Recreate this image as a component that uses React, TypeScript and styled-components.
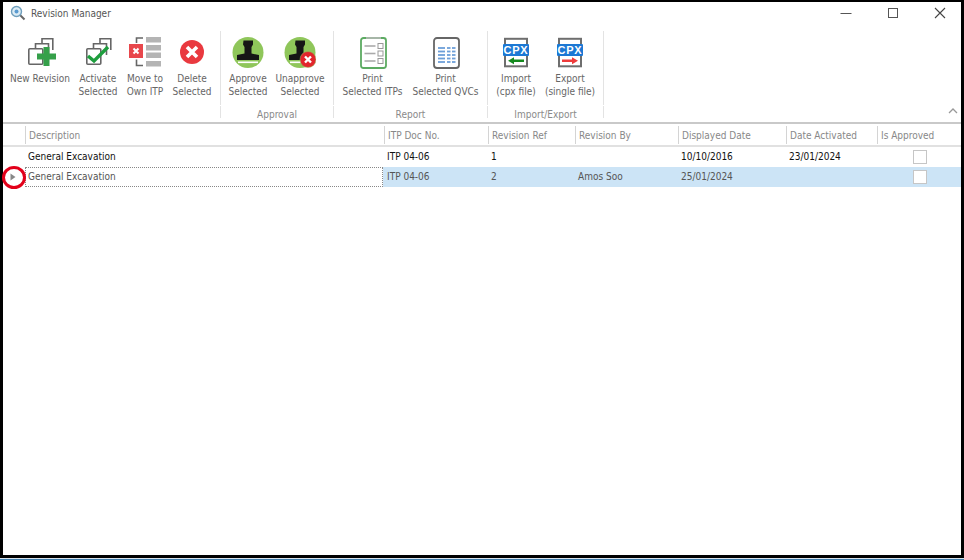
import styled, { createGlobalStyle } from "styled-components";
import type { ReactNode } from "react";

const GlobalStyle = createGlobalStyle`
  html, body {
    margin: 0;
    padding: 0;
    background: #fff;
    overflow: hidden;
  }
`;

const columns = "22px 359px 104px 87px 103px 108px 91px 84px";

const Page = styled.div`
  width: 964px;
  height: 560px;
  display: flex;
  flex-direction: column;
  font-family: "DejaVu Sans Condensed", "DejaVu Sans", "Noto Sans", sans-serif;
  font-stretch: condensed;
  font-size: 10px;
  background: #fff;
`;

const Frame = styled.div`
  flex: 1;
  min-height: 0;
  position: relative;
  display: flex;
  flex-direction: column;
  border: solid #000;
  border-width: 2px 3px 3px 3px;
`;

const BottomEdge = styled.div`
  height: 2px;
  background: linear-gradient(#d8e2ea 50%, #3f7cab 50%);
`;

const TitleBar = styled.div`
  height: 24px;
  box-sizing: border-box;
  display: flex;
  align-items: center;
  padding-left: 7px;
  padding-bottom: 2px;
`;

const TitleText = styled.span`
  margin-left: 5px;
  color: #555;
`;

const WindowControls = styled.div`
  margin-left: auto;
  display: flex;
  align-items: center;
  padding-right: 15px;
  gap: 35px;
`;

const Ribbon = styled.div`
  position: relative;
  height: 98px;
  display: flex;
  align-items: stretch;
  padding: 5px 0 4px;
  box-sizing: border-box;
  border-bottom: 2px solid #c9c9c9;
`;

const Group = styled.div<{ $width: number }>`
  width: ${(p) => p.$width}px;
  display: flex;
  flex-direction: column;
  gap: 1px;
`;

const GroupButtons = styled.div<{ $inset: number }>`
  flex: 1;
  display: flex;
  padding: 6px 0 0 ${(p) => p.$inset}px;
  border-right: 1px solid #e3e3e3;
`;

const GroupLabel = styled.div`
  height: 12px;
  line-height: 17px;
  text-align: center;
  color: #8a8a8a;
  border-right: 1px solid #e3e3e3;
`;

const RibbonButton = styled.div<{ $width: number }>`
  width: ${(p) => p.$width}px;
  display: flex;
  flex-direction: column;
  align-items: center;
  text-align: center;
  color: #666;
  line-height: 13px;
  white-space: nowrap;

  svg {
    display: block;
    margin-bottom: 3px;
  }
`;

const CollapseToggle = styled.svg`
  position: absolute;
  right: 3px;
  bottom: 8px;
`;

const HeaderRow = styled.div`
  display: grid;
  grid-template-columns: ${columns};
  height: 21px;
  align-items: center;
  border-bottom: 2px solid #e1e1e1;
`;

const HeaderCell = styled.div`
  height: 18px;
  line-height: 20px;
  padding-left: 3px;
  color: #888;
  border-left: 1px solid #d4d4d4;
  white-space: nowrap;
`;

const Row = styled.div<{ $selected?: boolean }>`
  display: grid;
  grid-template-columns: ${columns};
  height: 20px;
  color: ${(p) => (p.$selected ? "#555" : "#111")};
  background: ${(p) => (p.$selected ? "#cce4f6" : "#fff")};
`;

const Cell = styled.div<{ $focused?: boolean }>`
  height: 20px;
  box-sizing: border-box;
  line-height: 20px;
  padding-left: 3px;
  white-space: nowrap;
  ${(p) =>
    p.$focused &&
    `
    background: #fff;
    border: 1px dotted #888;
    line-height: 18px;
    padding-left: 2px;
    margin-right: 1px;
  `}
`;

const IndicatorCell = styled.div`
  display: flex;
  align-items: center;
  padding-left: 7px;
  background: #fff;
`;

const CheckCell = styled.div`
  display: flex;
  align-items: center;
  padding: 0 0 1px 36px;
`;

const CheckBox = styled.span`
  width: 12px;
  height: 12px;
  background: #fff;
  border: 1px solid #c6c6c6;
`;

const Callout = styled.div`
  position: absolute;
  left: -1px;
  top: 164px;
  width: 18px;
  height: 17px;
  border: 3px solid #e2001a;
  border-radius: 50%;
`;

const SearchIcon = () => (
  <svg width="16" height="16" viewBox="0 0 16 16">
    <line x1="9.500" y1="9.500" x2="14.500" y2="14.500" stroke="#666" strokeWidth="2" />
    <circle cx="6.500" cy="6.500" r="5" fill="#dcecf5" stroke="#6f9fbd" strokeWidth="1.400" />
    <circle cx="6.500" cy="6.500" r="2" fill="#5b9bd0" />
  </svg>
);

const Stack = ({ children }: { children: ReactNode }) => (
  <svg width="32" height="32" viewBox="0 0 32 32" fill="none">
    <g stroke="#666" strokeWidth="1.600">
      <rect x="4.800" y="11.800" width="14" height="15.500" rx="1" />
      <path d="M11.500 11V6.800H24.500V18" />
      <path d="M18 6V1.800H28.800V13" />
    </g>
    {children}
  </svg>
);

const NewRevisionIcon = () => (
  <Stack>
    <path d="M19.500 10h6v6.500H32v6h-6.500v6.500h-6v-6.500H13v-6h6.500z" fill="#35a04a" />
  </Stack>
);

const ActivateIcon = () => (
  <Stack>
    <path d="M6 19l6 5L26 10" stroke="#1e9e3e" strokeWidth="3.400" fill="none" />
  </Stack>
);

const MoveIcon = () => (
  <svg width="32" height="32" viewBox="0 0 32 32">
    {[0, 8, 15.500, 24].map((y) => (
      <rect key={y} x="17" y={y} width="15" height="5.500" fill="#b4b4b4" />
    ))}
    <path d="M14 1H7.500V6M7.500 22.500V28.500H14" fill="none" stroke="#666" strokeWidth="1.600" />
    <rect x="0" y="7" width="14" height="14" fill="#e8474c" />
    <path d="M4.500 11.500l5 5M9.500 11.500l-5 5" stroke="#fff" strokeWidth="2" />
  </svg>
);

const DeleteIcon = () => (
  <svg width="32" height="32" viewBox="0 0 32 32">
    <circle cx="16" cy="15" r="12" fill="#e9393f" />
    <path d="M11 10l10 10M21 10L11 20" stroke="#fff" strokeWidth="3.600" />
  </svg>
);

const Stamp = () => (
  <>
    <circle cx="16" cy="15.500" r="15.500" fill="#8fc65a" />
    <path d="M11.500 3.500h9.500v4l-1.500 2.500v6.500l7.500 1.500v5H5v-5l7.500-1.500V10L11 7.500z" fill="#161616" />
    <rect x="6" y="24.500" width="20" height="1.600" fill="#fff" />
  </>
);

const ApproveIcon = () => (
  <svg width="32" height="32" viewBox="0 0 32 32">
    <Stamp />
  </svg>
);

const UnapproveIcon = () => (
  <svg width="32" height="32" viewBox="0 0 32 32">
    <Stamp />
    <circle cx="24" cy="22.500" r="8" fill="#e2252c" stroke="#8fc65a" strokeWidth="0.500" />
    <path d="M21 19.500l6 6M27 19.500l-6 6" stroke="#fff" strokeWidth="2.400" />
  </svg>
);

const PrintItpIcon = () => (
  <svg width="32" height="32" viewBox="0 0 32 32" fill="none">
    <rect x="4" y="1" width="25" height="30" rx="2.500" fill="#fff" stroke="#5cab62" strokeWidth="1.800" />
    <rect x="9" y="0.200" width="15" height="1.600" fill="#b9b9b9" />
    {[9, 16.500, 24].map((y) => (
      <g key={y}>
        <line x1="7.500" y1={y} x2="18.500" y2={y} stroke="#aaa" strokeWidth="1.600" />
        <rect x="21" y={y - 2.500} width="5" height="5" stroke="#999" strokeWidth="1" />
      </g>
    ))}
  </svg>
);

const PrintQvcIcon = () => (
  <svg width="32" height="32" viewBox="0 0 32 32" fill="none">
    <rect x="4" y="1" width="25" height="30" rx="3" fill="#fff" stroke="#666" strokeWidth="1.800" />
    {[11, 14.500, 18, 21.500, 25].map((y) => (
      <g key={y}>
        <line x1="8" y1={y} x2="15" y2={y} stroke="#6d9fd8" strokeWidth="1.800" />
        <line x1="17" y1={y} x2="20.500" y2={y} stroke="#6d9fd8" strokeWidth="1.800" />
        <line x1="22" y1={y} x2="25.500" y2={y} stroke="#6d9fd8" strokeWidth="1.800" />
      </g>
    ))}
  </svg>
);

const CpxLabel = styled.text`
  font-family: "Liberation Sans", sans-serif;
  font-size: 11px;
  font-weight: 700;
  fill: #fff;
  letter-spacing: 0.800px;
`;

const CpxIcon = ({ arrow }: { arrow: ReactNode }) => (
  <svg width="32" height="32" viewBox="0 0 32 32" fill="none">
    <rect x="5" y="1.800" width="22" height="27.500" fill="#fff" stroke="#6e6e6e" strokeWidth="2" />
    <rect x="3" y="7" width="26" height="12" rx="1" fill="#1c78d4" />
    <CpxLabel x="16" y="17" textAnchor="middle">
      CPX
    </CpxLabel>
    {arrow}
  </svg>
);

const ImportIcon = () => (
  <CpxIcon arrow={<path d="M8 23.800l6-3.500v2.200h10v2.600H14v2.200z" fill="#158a1e" />} />
);

const ExportIcon = () => (
  <CpxIcon arrow={<path d="M24 23.800l-6-3.500v2.200H8v2.600h10v2.200z" fill="#ee3b3b" />} />
);

const ribbon = [
  {
    label: "",
    width: 218,
    inset: 5,
    buttons: [
      { icon: <NewRevisionIcon />, text: ["New Revision"], width: 64 },
      { icon: <ActivateIcon />, text: ["Activate", "Selected"], width: 52 },
      { icon: <MoveIcon />, text: ["Move to", "Own ITP"], width: 42 },
      { icon: <DeleteIcon />, text: ["Delete", "Selected"], width: 52 },
    ],
  },
  {
    label: "Approval",
    width: 113,
    inset: 1,
    buttons: [
      { icon: <ApproveIcon />, text: ["Approve", "Selected"], width: 52 },
      { icon: <UnapproveIcon />, text: ["Unapprove", "Selected"], width: 52 },
    ],
  },
  {
    label: "Report",
    width: 154,
    inset: 2,
    buttons: [
      { icon: <PrintItpIcon />, text: ["Print", "Selected ITPs"], width: 73 },
      { icon: <PrintQvcIcon />, text: ["Print", "Selected QVCs"], width: 73 },
    ],
  },
  {
    label: "Import/Export",
    width: 116,
    inset: 1,
    buttons: [
      { icon: <ImportIcon />, text: ["Import", "(cpx file)"], width: 54 },
      { icon: <ExportIcon />, text: ["Export", "(single file)"], width: 54 },
    ],
  },
];

const headers = [
  "Description",
  "ITP Doc No.",
  "Revision Ref",
  "Revision By",
  "Displayed Date",
  "Date Activated",
  "Is Approved",
];

const rows = [
  ["General Excavation", "ITP 04-06", "1", "", "10/10/2016", "23/01/2024"],
  ["General Excavation", "ITP 04-06", "2", "Amos Soo", "25/01/2024", ""],
];

const App = () => {
  return (
    <Page>
      <GlobalStyle />
      <Frame>
        <TitleBar>
          <SearchIcon />
          <TitleText>Revision Manager</TitleText>
          <WindowControls>
            <svg width="12" height="12" viewBox="0 0 12 12">
              <line x1="0.500" y1="6.500" x2="11.500" y2="6.500" stroke="#555" />
            </svg>
            <svg width="12" height="12" viewBox="0 0 12 12" fill="none">
              <rect x="1.500" y="1.500" width="9" height="9" stroke="#555" />
            </svg>
            <svg width="12" height="12" viewBox="0 0 12 12">
              <path d="M1 1l10 10M11 1L1 11" stroke="#444" strokeWidth="1.100" />
            </svg>
          </WindowControls>
        </TitleBar>

        <Ribbon>
          {ribbon.map((group, i) => (
            <Group key={i} $width={group.width}>
              <GroupButtons $inset={group.inset}>
                {group.buttons.map((button) => (
                  <RibbonButton key={button.text.join()} $width={button.width}>
                    {button.icon}
                    {button.text.map((line) => (
                      <span key={line}>{line}</span>
                    ))}
                  </RibbonButton>
                ))}
              </GroupButtons>
              <GroupLabel>{group.label}</GroupLabel>
            </Group>
          ))}
          <CollapseToggle width="10" height="6" viewBox="0 0 10 6" fill="none">
            <path d="M1 5l4-4 4 4" stroke="#999" strokeWidth="1.300" />
          </CollapseToggle>
        </Ribbon>

        <HeaderRow>
          <span />
          {headers.map((h) => (
            <HeaderCell key={h}>{h}</HeaderCell>
          ))}
        </HeaderRow>

        {rows.map((row, r) => (
          <Row key={r} $selected={r === 1}>
            <IndicatorCell>
              {r === 1 && (
                <svg width="6" height="8" viewBox="0 0 6 8">
                  <path d="M0.500 0.500l5 3.500-5 3.500z" fill="#888" />
                </svg>
              )}
            </IndicatorCell>
            {row.map((value, c) => (
              <Cell key={c} $focused={r === 1 && c === 0}>
                {value}
              </Cell>
            ))}
            <CheckCell>
              <CheckBox />
            </CheckCell>
          </Row>
        ))}

        <Callout />
      </Frame>
      <BottomEdge />
    </Page>
  );
};

export default App;
